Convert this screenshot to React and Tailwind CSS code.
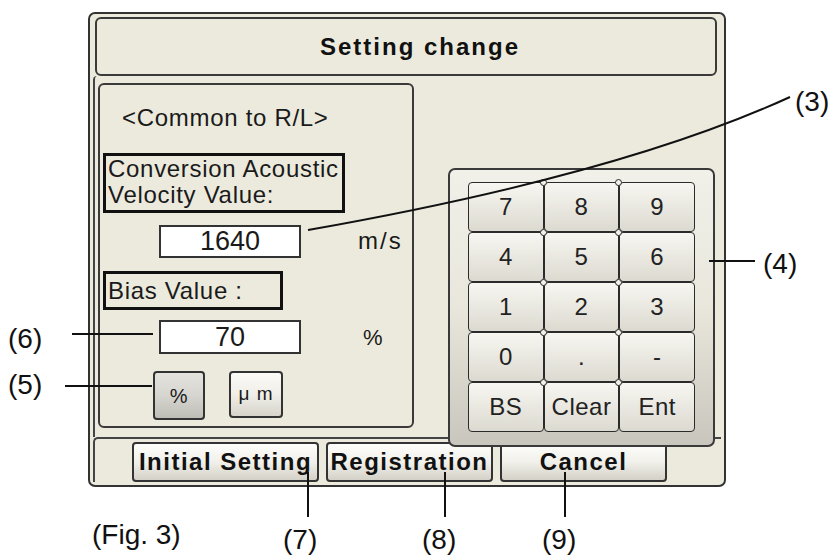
import React from 'react';

const keys = ['7', '8', '9', '4', '5', '6', '1', '2', '3', '0', '.', '-', 'BS', 'Clear', 'Ent'];

function Key({ label, joint }) {
  return (
    <div className="relative flex items-center justify-center border-x-[1.5px] border-y border-[#2b2b2b] rounded-[4px] bg-linear-to-b from-[#f7f6f1] to-[#dcdad0] text-[24px] text-[#222] tracking-[0.5px]">
      {label}
      {joint && (
        <span className="absolute -top-[4px] -right-[4px] w-[7px] h-[7px] rounded-full bg-[#f2f1ea] border-[1.5px] border-[#2b2b2b] z-10" />
      )}
    </div>
  );
}

function BarButton({ children, width }) {
  return (
    <div className={`${width} h-[40px] flex items-center justify-center border-2 border-[#333] rounded-[4px] bg-linear-to-b from-[#fdfdfb] via-[#f1f0ea] to-[#d3d1c7] font-bold text-[24px] tracking-[1.5px] text-[#111]`}>
      {children}
    </div>
  );
}

export default function App() {
  return (
    <div className="relative w-[833px] h-[560px] bg-white overflow-hidden pt-[12px] pl-[88px] font-['Liberation_Sans',Arial,sans-serif] text-[#1a1a1a]">
      {/* Device screen */}
      <div className="w-[638px] h-[475px] border-2 border-[#333] rounded-[7px] bg-[#ECEADD] p-[3px] flex flex-col">
        <div className="ml-[2px] w-[622px] h-[59px] shrink-0 border-2 border-[#3a3a3a] rounded-[6px] flex items-center justify-center pl-[28px] font-bold text-[24px] tracking-[2px] text-[#111]">
          Setting change
        </div>

        <div className="h-[361px] shrink-0 flex border-l-2 border-[#444] rounded-tl-[4px]">
          {/* Left panel */}
          <div className="ml-[3px] mt-[7px] w-[316px] h-[345px] border-2 border-[#3a3a3a] rounded-[6px] flex flex-col text-[24px] tracking-[0.7px]">
            <div className="pt-[19px] pl-[22px] leading-[28px]">&lt;Common to R/L&gt;</div>

            <div className="ml-[3px] mt-[21px] w-[242px] h-[60px] border-[3px] border-[#111] pl-[2px] leading-[26px]">
              <div>Conversion Acoustic</div>
              <div>Velocity Value:</div>
            </div>

            <div className="mt-[10px] ml-[59px] flex items-center">
              <div className="w-[142px] h-[33px] border-2 border-[#333] bg-white flex items-center justify-center text-[27px] tracking-normal">1640</div>
              <span className="ml-[57px] tracking-[2px]">m/s</span>
            </div>

            <div className="ml-[3px] mt-[12px] w-[180px] h-[39px] border-[3px] border-[#111] pl-[2px] flex items-center">
              Bias Value :
            </div>

            <div className="mt-[10px] ml-[59px] flex items-center">
              <div className="w-[142px] h-[34px] border-2 border-[#333] bg-white flex items-center justify-center text-[27px] tracking-normal">70</div>
              <span className="ml-[62px] text-[22px]">%</span>
            </div>

            <div className="mt-[17px] ml-[53px] flex items-start">
              <div className="w-[52px] h-[49px] border-2 border-[#333] rounded-[4px] bg-linear-to-b from-[#e4e3dd] via-[#d6d5cf] to-[#bebdb6] flex items-center justify-center text-[20px]">%</div>
              <div className="ml-[24px] w-[54px] h-[47px] border-2 border-[#333] rounded-[4px] bg-linear-to-b from-[#fbfaf6] via-[#efeee8] to-[#d6d4ca] flex items-center justify-center text-[19px] tracking-[1px]">μ m</div>
            </div>
          </div>

          {/* Keypad */}
          <div className="relative z-10 ml-[34px] mt-[92px] w-[267px] h-[279px] shrink-0 border-2 border-[#3a3a3a] rounded-[7px] bg-linear-to-b from-[#f1f0e9] via-[#e9e7dc] to-[#c9c7bd] pl-[18px] pt-[12px]">
            <div className="grid grid-cols-3 grid-rows-5 w-[227px] h-[250px]">
              {keys.map((k, i) => (
                <Key key={k} label={k} joint={i % 3 !== 2} />
              ))}
            </div>
          </div>
        </div>

        {/* Bottom bar */}
        <div className="flex-1 border-t-2 border-l-2 border-[#444] rounded-tl-[5px] pt-[3px] pl-[37px] flex gap-[7px]">
          <BarButton width="w-[187px]">Initial Setting</BarButton>
          <BarButton width="w-[167px]">Registration</BarButton>
          <BarButton width="w-[167px]">Cancel</BarButton>
        </div>
      </div>

      {/* Callout leader lines */}
      <svg className="absolute inset-0 z-20 pointer-events-none" width="833" height="560" viewBox="0 0 833 560">
        <g stroke="#111" strokeWidth="2" fill="none">
          <path d="M308 230 Q620 175 790 97" />
          <line x1="709" y1="261" x2="755" y2="261" />
          <line x1="72" y1="334" x2="153" y2="334" />
          <line x1="65" y1="386" x2="152" y2="386" />
          <line x1="308" y1="472" x2="308" y2="517" />
          <line x1="445" y1="472" x2="445" y2="517" />
          <line x1="565" y1="472" x2="565" y2="517" />
        </g>
      </svg>

      {/* Callout labels */}
      <span className="absolute z-20 left-[795px] top-[88px] text-[28px] leading-[28px] text-[#111]">(3)</span>
      <span className="absolute z-20 left-[763px] top-[250px] text-[28px] leading-[28px] text-[#111]">(4)</span>
      <span className="absolute z-20 left-[8px] top-[325px] text-[28px] leading-[28px] text-[#111]">(6)</span>
      <span className="absolute z-20 left-[8px] top-[371px] text-[28px] leading-[28px] text-[#111]">(5)</span>
      <span className="absolute z-20 left-[92px] top-[521px] text-[28px] leading-[28px] text-[#111]">(Fig. 3)</span>
      <span className="absolute z-20 left-[283px] top-[526px] text-[28px] leading-[28px] text-[#111]">(7)</span>
      <span className="absolute z-20 left-[422px] top-[526px] text-[28px] leading-[28px] text-[#111]">(8)</span>
      <span className="absolute z-20 left-[542px] top-[526px] text-[28px] leading-[28px] text-[#111]">(9)</span>
    </div>
  );
}
